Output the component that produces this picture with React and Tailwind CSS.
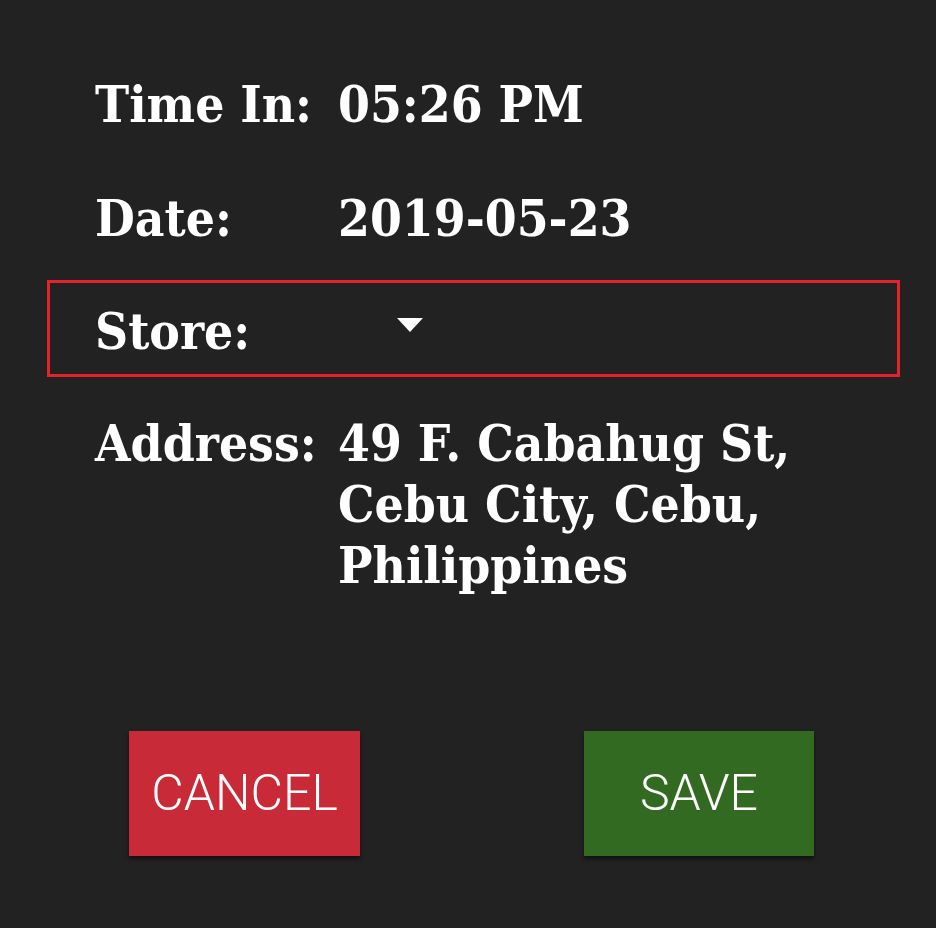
export default function App() {
  const serif = { fontFamily: '"DejaVu Serif Condensed", "DejaVu Serif", "Liberation Serif", serif' };
  return (
    <div className="w-[936px] h-[928px] bg-[#222222] text-white overflow-hidden" style={serif}>
      <div className="pt-[74px] pl-[47px] pr-[36px] font-stretch-condensed">
        <div className="flex pl-[48px] font-bold text-[51px] leading-[61px]">
          <div className="w-[243px] shrink-0">Time In:</div>
          <div>05:26 PM</div>
        </div>
        <div className="flex pl-[48px] font-bold text-[51px] leading-[61px] mt-[53px]">
          <div className="w-[243px] shrink-0">Date:</div>
          <div>2019-05-23</div>
        </div>
        <div className="mt-[31px] border-[3px] border-[#e3222b] h-[97px] flex items-center pl-[45px]">
          <div className="w-[243px] shrink-0 font-bold text-[51px] leading-[61px] mt-[6px]">Store:</div>
          <div className="ml-[59px] mt-[-8px] w-0 h-0 border-l-[13px] border-r-[13px] border-t-[14px] border-l-transparent border-r-transparent border-t-white"></div>
        </div>
        <div className="flex pl-[48px] font-bold text-[51px] leading-[61px] mt-[36px]">
          <div className="w-[243px] shrink-0">Address:</div>
          <div className="w-[470px]">49 F. Cabahug St, Cebu City, Cebu, Philippines</div>
        </div>
      </div>
      <div className="flex pl-[129px] mt-[135px] gap-[224px]" style={{ fontFamily: 'Roboto, "Noto Sans", sans-serif' }}>
        <div className="w-[231px] h-[125px] bg-[#c92a37] flex items-center justify-center text-[50px] font-light shadow-[0_3px_4px_rgba(0,0,0,0.5)]">CANCEL</div>
        <div className="w-[230px] h-[125px] bg-[#336a22] flex items-center justify-center text-[50px] font-light shadow-[0_3px_4px_rgba(0,0,0,0.5)]">SAVE</div>
      </div>
    </div>
  );
}
